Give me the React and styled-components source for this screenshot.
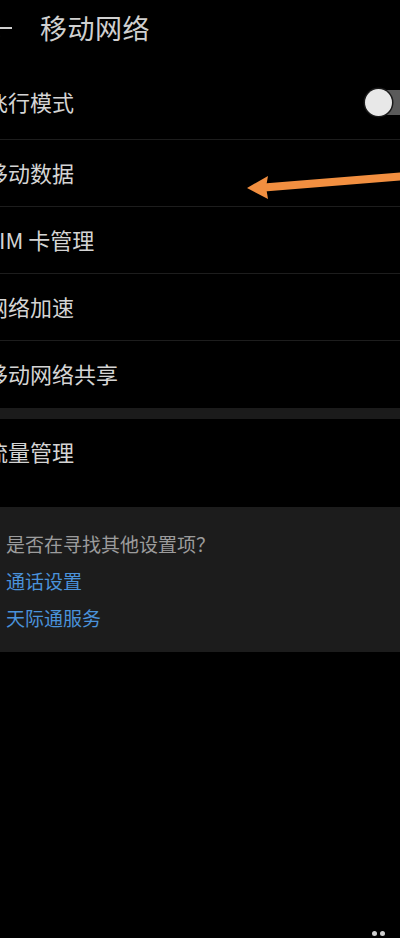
import React from "react";
import styled, { createGlobalStyle } from "styled-components";

const GlobalStyle = createGlobalStyle`
  html, body { margin: 0; padding: 0; background: #000; }
  body { font-family: "Noto Sans CJK SC", "Noto Sans", sans-serif; }
`;

const Screen = styled.div`
  position: relative;
  width: 400px;
  height: 938px;
  background: #000;
  overflow: hidden;
`;

const Shifted = styled.div`
  margin-left: -30px;
  width: 442px;
`;

const Header = styled.header`
  height: 66px;
  display: flex;
  align-items: flex-start;
  padding: 11px 0 0 18px;
  gap: 28px;
  box-sizing: border-box;
`;

const BackIcon = styled.svg`
  width: 24px;
  height: 34px;
  flex: none;
`;

const Title = styled.h1`
  margin: 0;
  font-size: 27px;
  line-height: 34px;
  font-weight: 400;
  color: #d0d0d0;
  letter-spacing: 0.5px;
`;

const Row = styled.div`
  height: ${(p) => (p.$tall ? 74 : 67)}px;
  display: flex;
  align-items: center;
  justify-content: space-between;
  padding-left: 16px;
  box-sizing: border-box;
  border-bottom: ${(p) => (p.$last ? "none" : "1px solid #1d1d1d")};
`;

const RowLabel = styled.span`
  font-size: 22px;
  color: #d4d4d4;
  line-height: 30px;
  margin-top: -3px;
`;

const Band = styled.div`
  height: 11px;
  background: #1b1b1b;
`;

const Toggle = styled.div`
  position: relative;
  width: 48px;
  height: 25px;
  border-radius: 13px;
  background: #5a5a5a;
  flex: none;
`;

const Knob = styled.div`
  position: absolute;
  left: 1px;
  top: -1px;
  width: 27px;
  height: 27px;
  border-radius: 50%;
  background: #e8e8e8;
  box-shadow: 0 0 0 1.5px #1a1a1a;
`;

const Card = styled.section`
  margin-top: 21px;
  background: #1c1c1c;
  padding: 22px 0 19px 36px;
  display: flex;
  flex-direction: column;
  gap: 7px;
`;

const CardText = styled.div`
  font-size: 19px;
  line-height: 30px;
  color: ${(p) => (p.$link ? "#4a92da" : "#9c9c9c")};
`;

const Annotation = styled.svg`
  position: absolute;
  left: 240px;
  top: 165px;
  width: 160px;
  height: 40px;
`;

const Dots = styled.div`
  position: absolute;
  left: 372px;
  top: 931px;
  display: flex;
  gap: 3px;
`;

const Dot = styled.span`
  width: 5px;
  height: 5px;
  border-radius: 50%;
  background: #cfcfcf;
`;

export default function App() {
  const rows = ["飞行模式", "移动数据", "SIM 卡管理", "网络加速", "移动网络共享"];
  return (
    <Screen>
      <GlobalStyle />
      <Shifted>
        <Header>
          <BackIcon viewBox="0 0 24 34">
            <path
              d="M3 17 H24 M3 17 L11 9 M3 17 L11 25"
              stroke="#cfcfcf"
              strokeWidth="2"
              fill="none"
              strokeLinecap="round"
            />
          </BackIcon>
          <Title>移动网络</Title>
        </Header>
        {rows.map((r, i) => (
          <Row key={r} $tall={i === 0} $last={i === rows.length - 1}>
            <RowLabel>{r}</RowLabel>
            {i === 0 && (
              <Toggle>
                <Knob />
              </Toggle>
            )}
          </Row>
        ))}
        <Band />
        <Row $last>
          <RowLabel>流量管理</RowLabel>
        </Row>
        <Card>
          <CardText>是否在寻找其他设置项？</CardText>
          <CardText $link>通话设置</CardText>
          <CardText $link>天际通服务</CardText>
        </Card>
      </Shifted>
      <Annotation viewBox="0 0 160 40">
        <line x1="24" y1="22.5" x2="165" y2="11" stroke="#f28f40" strokeWidth="8" />
        <polygon points="7,23 28,11 26,22 28,34" fill="#f28f40" />
      </Annotation>
      <Dots>
        <Dot />
        <Dot />
      </Dots>
    </Screen>
  );
}
